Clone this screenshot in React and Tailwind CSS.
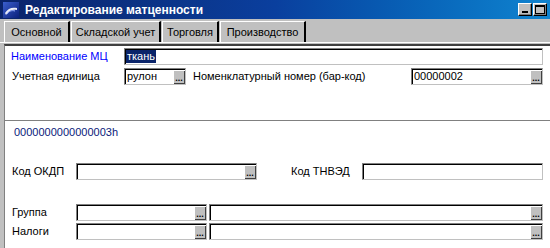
import React from 'react';

const Dots = () => (
  <div className="ml-auto mt-auto flex h-[13px] w-[11px] shrink-0 items-end justify-center border-r border-b border-r-[#404040] border-b-[#404040] bg-[#c0c0c0] text-[9px] font-bold leading-[9px] text-black">
    ...
  </div>
);

const Field = ({ w, value, btn, selected }) => (
  <div className={`flex h-[17px] ${w} shrink-0 border border-t-[#808080] border-l-[#808080] border-r-[#c0c0c0] border-b-[#c0c0c0] bg-white shadow-[inset_1px_1px_0_#000]`}>
    {value && (
      <span
        className={`ml-[1px] mt-[1px] h-[13px] px-[1px] text-[11px] leading-[13px] ${
          selected ? 'bg-[#0a246a] text-white' : 'text-black'
        }`}
      >
        {value}
      </span>
    )}
    {btn && <Dots />}
  </div>
);

const Tab = ({ label, w, active }) => (
  <div
    className={`flex h-[21px] ${w} items-center justify-center border-t border-l border-t-white border-l-white border-r-2 border-r-black text-[11px] ${
      active ? 'mb-[-1px] h-[22px]' : ''
    }`}
  >
    {label}
  </div>
);

const TitleIcon = () => (
  <svg width="16" height="16" viewBox="0 0 16 16">
    <defs>
      <linearGradient id="ic" x1="0" y1="0" x2="1" y2="1">
        <stop offset="0" stopColor="#3a5fcd" />
        <stop offset="1" stopColor="#0a1f7a" />
      </linearGradient>
    </defs>
    <rect x="0" y="0" width="16" height="16" fill="url(#ic)" />
    <path d="M2 11 C5 6, 9 5, 14 6 L14 8 C10 7, 6 8, 3 13 Z" fill="#ffffff" opacity="0.9" />
    <path d="M4 12 C6 9, 9 8, 12 9" stroke="#9fb4ff" strokeWidth="1" fill="none" />
  </svg>
);

const WinBtn = ({ children }) => (
  <div className="flex h-[13px] w-[14px] items-center justify-center border border-t-white border-l-white border-r-black border-b-black bg-[#c0c0c0] shadow-[inset_-1px_-1px_0_#808080]">
    {children}
  </div>
);

export default function App() {
  return (
    <div className="flex h-[248px] w-[550px] flex-col overflow-hidden bg-[#c0c0c0] font-['Liberation_Sans',Arial,sans-serif] text-black">
      {/* title bar */}
      <div className="flex h-[19px] shrink-0 items-center bg-gradient-to-r from-[#0a246a] via-[#0a3f9e] to-[#1084d0] pl-[3px] pr-[3px]">
        <TitleIcon />
        <span className="ml-[6px] text-[12px] font-bold leading-none text-white">
          Редактирование матценности
        </span>
        <div className="ml-auto flex gap-[1px]">
          <WinBtn>
            <div className="mt-[5px] h-[2px] w-[6px] bg-black" />
          </WinBtn>
          <WinBtn>
            <div className="h-[9px] w-[10px] border border-t-2 border-black" />
          </WinBtn>
        </div>
      </div>

      {/* tabs */}
      <div className="flex h-[23px] shrink-0 items-end pl-[4px] gap-[1px]">
        <Tab label="Основной" w="w-[66px]" active />
        <Tab label="Складской учет" w="w-[90px]" />
        <Tab label="Торговля" w="w-[57px]" />
        <Tab label="Производство" w="w-[86px]" />
      </div>
      <div className="h-[1px] shrink-0 bg-white" />
      <div className="h-[1px] shrink-0 bg-[#c0c0c0]" />

      {/* page */}
      <div className="flex flex-1 pl-[4px]">
        <div className="flex flex-1 flex-col border-t-2 border-l border-t-[#404040] border-l-[#808080] bg-white text-[11px]">
          <div className="mt-[2px] flex items-center pl-[6px]">
            <span className="w-[113px] text-[#0000ff]">Наименование МЦ</span>
            <Field w="w-[419px]" value="ткань" selected />
          </div>
          <div className="mt-[3px] flex items-center pl-[7px]">
            <span className="w-[112px]">Учетная единица</span>
            <Field w="w-[62px]" value="рулон" btn />
            <span className="ml-[7px] w-[218px]">Номенклатурный номер (бар-код)</span>
            <Field w="w-[132px]" value="00000002" btn />
          </div>

          <div className="mt-[35px] h-[1px] bg-[#808080]" />

          <div className="mt-[5px] pl-[9px] text-[11px] leading-[13px] text-[#0a1a7a]">
            0000000000000003h
          </div>

          <div className="mt-[24px] flex items-center pl-[7px]">
            <span className="w-[64px]">Код ОКДП</span>
            <Field w="w-[181px]" btn />
            <span className="ml-[34px] w-[71px]">Код ТНВЭД</span>
            <Field w="w-[181px]" />
          </div>

          <div className="mt-[24px] flex items-center pl-[7px]">
            <span className="w-[64px]">Группа</span>
            <Field w="w-[131px]" btn />
            <div className="w-[2px]" />
            <Field w="w-[334px]" btn />
          </div>
          <div className="mt-[2px] flex items-center pl-[7px]">
            <span className="w-[64px]">Налоги</span>
            <Field w="w-[131px]" btn />
            <div className="w-[2px]" />
            <Field w="w-[334px]" btn />
          </div>
        </div>
      </div>
    </div>
  );
}
